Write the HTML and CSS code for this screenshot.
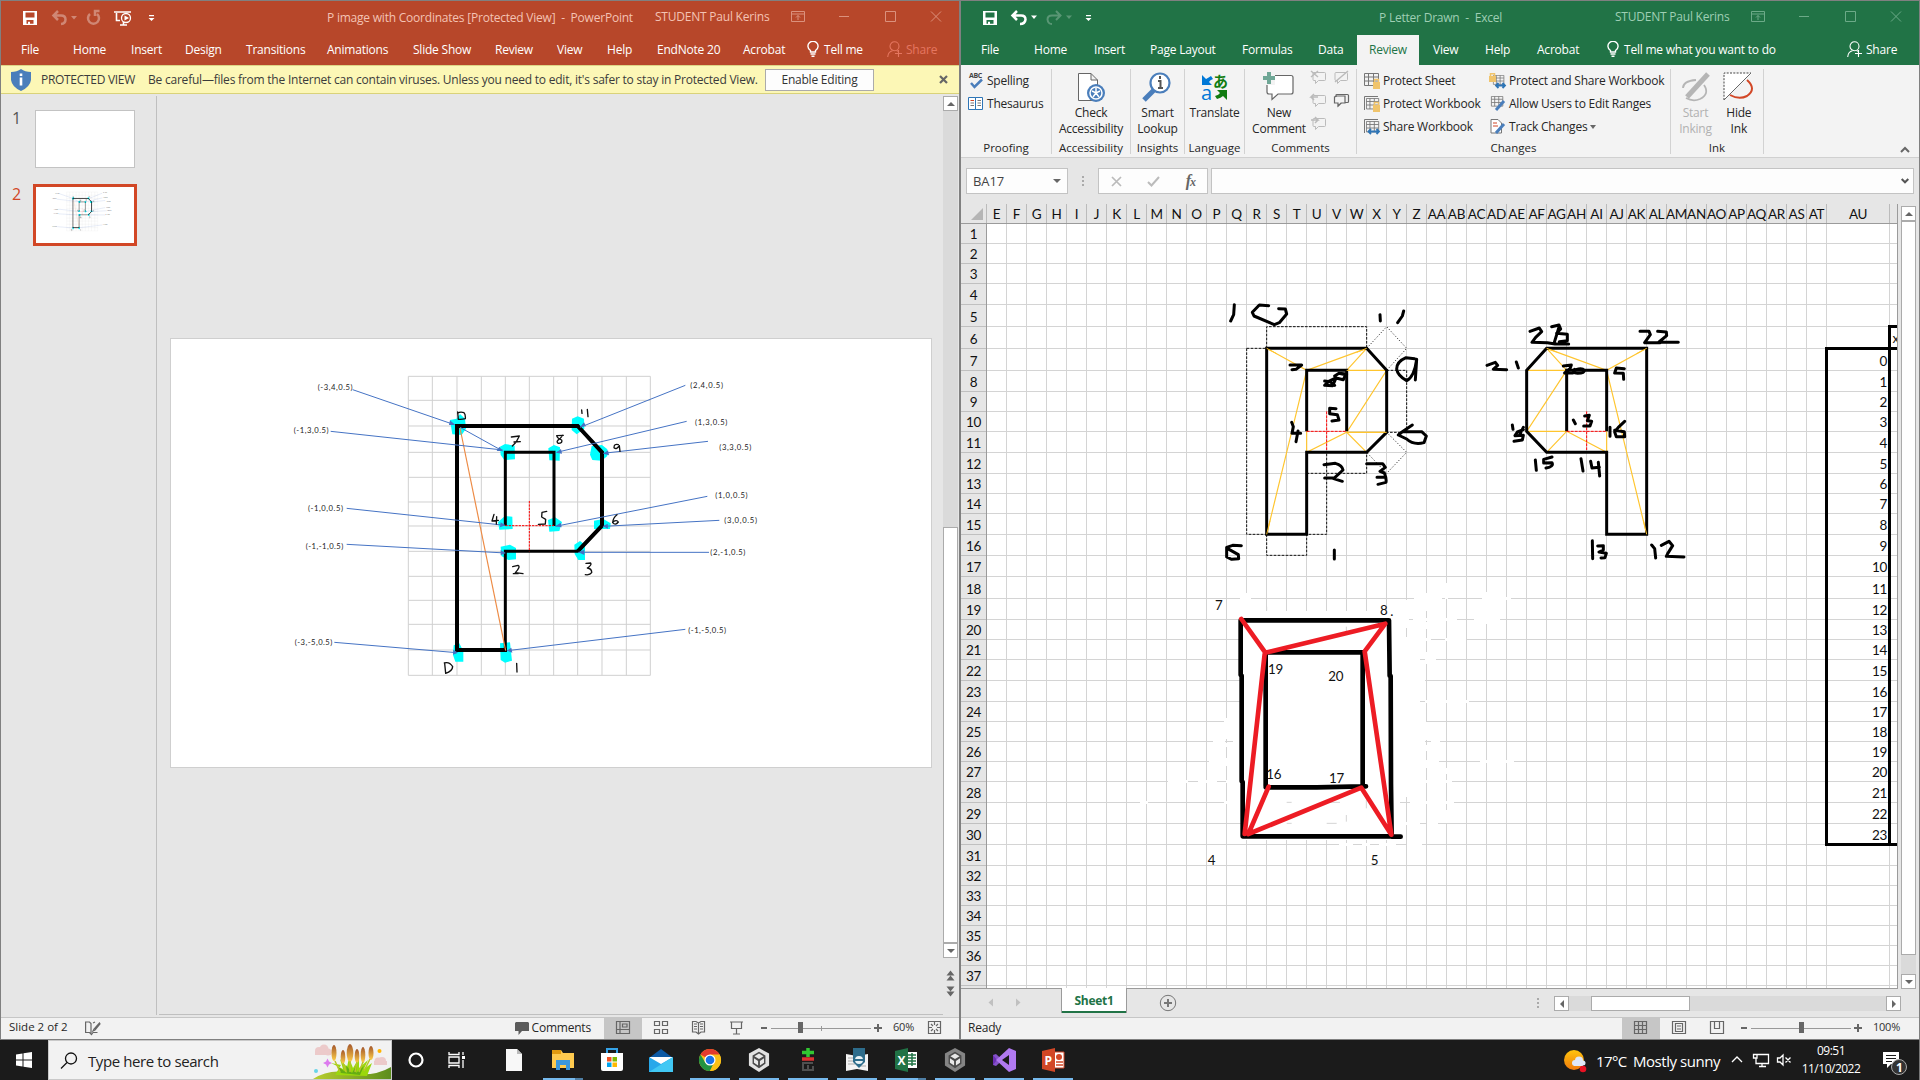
FILE: index.html
```html
<!DOCTYPE html>
<html lang="en">
<head>
<meta charset="utf-8">
<title>Desktop</title>
<link rel="stylesheet" href="styles.css">
</head>
<body>
<svg class="symbols" width="0" height="0">
  <symbol id="save" viewBox="0 0 14 14"><path d="M0 0H14V14H0Z" fill="currentColor"/><path class="hole" d="M2.5 1.5H11.5V6.5H2.5ZM3.5 9H10.5V12.8H7V10.8H5V12.8H3.5Z"/></symbol>
  <symbol id="bulb" viewBox="0 0 12 16"><path d="M3.5 11V9.500C1.500 8 .9 6.800.9 5.200A5 4.800 0 0 1 11.100 5.200C11.100 6.800 10.500 8 8.500 9.500V11ZM3.500 13H8.500M4.500 15.300H7.500" fill="none" stroke="currentColor" stroke-width="1.400"/></symbol>
  <symbol id="person" viewBox="0 0 15 16"><circle cx="7.500" cy="5.300" r="4.500"/><path d="M.7 16C1 12 3 10.200 5.500 9.700M9.500 9.600L11 10.200M11.500 9V16M8 12.500H15"/></symbol>
  <symbol id="winctl" viewBox="0 0 160 20"><path d="M.5 3.500H13.500V13.500H.5ZM.5 6H13.500M7 12V7.500M5 9.500L7 7.500L9 9.500M48 8.500H58M94.500 3.500H104.500V13.500H94.500ZM140 3.500L150 13.500M150 3.500L140 13.500"/></symbol>
  <symbol id="cube" viewBox="0 0 24 26"><path d="M12 0L23 6V19L12 26L1 19V6Z" fill="currentColor"/><path d="M12 4L19 8V17L12 22L5 17V8Z" fill="#4a4a4a"/><path d="M12 6L17 9L12 12L7 9ZM6.500 11L11 14V19L6.500 16ZM17.500 11L13 14V19L17.500 16Z" fill="#e8e8e8"/></symbol>
  <symbol id="comment" viewBox="0 0 16 16"><path d="M2 3.500Q2 2.500 3 2.500H13.500Q14.500 2.500 14.500 3.500V9.500Q14.500 10.500 13.500 10.500H7.500L4.500 13.500V10.500H3Q2 10.500 2 9.500Z"/></symbol>
  <symbol id="sheet" viewBox="0 0 16 16"><path d="M.5.500H14.500V12.500H.5ZM.5 4H14.500M.5 8H14.500M4.500.500V12.500M9.500.500V12.500"/></symbol>
</svg>

<main class="windows">
  <section class="window ppt">
    <header class="titlebar">
      <svg class="qat" width="160" height="32" viewBox="0 0 160 32">
        <use href="#save" x="22" y="11" width="14" height="14"/>
        <g class="faded" fill="none" stroke="currentColor" stroke-width="2.500"><path d="M57 11L52.500 15.500L57 20M53 15.500H60Q64.500 15.500 64.500 19.500T60 24"/><path d="M89 14A5.500 5.500 0 1 0 96 14M98.500 11H94V16"/></g>
        <path class="faded" d="M70 16H76L73 19.500Z" fill="currentColor"/>
        <path d="M113 12H130M115.500 13V20.500H119M119 25H126M122.500 22V25" fill="none" stroke="currentColor" stroke-width="1.600"/><circle cx="125" cy="18" r="4.500" fill="none" stroke="currentColor" stroke-width="1.300"/><path d="M123.500 15.500L128 18L123.500 20.500Z" fill="currentColor"/>
        <path d="M148 15H153V16.200H148ZM147.500 18H153.500L150.500 21Z" fill="currentColor"/>
      </svg>
      <span class="doc">P image with Coordinates [Protected View]&nbsp; -&nbsp; PowerPoint</span>
      <span class="user">STUDENT Paul Kerins</span>
      <svg class="winctl" width="160" height="20"><use href="#winctl"/></svg>
    </header>
    <nav class="tabs">
      <span>File</span><span>Home</span><span>Insert</span><span>Design</span><span>Transitions</span><span>Animations</span><span>Slide Show</span><span>Review</span><span>View</span><span>Help</span><span>EndNote 20</span><span>Acrobat</span>
      <span class="tell"><svg width="12" height="16"><use href="#bulb"/></svg>Tell me</span>
      <span class="share dim"><svg width="15" height="16"><use href="#person"/></svg>Share</span>
    </nav>
    <div class="protected">
      <svg width="20" height="22" viewBox="0 0 20 22"><path d="M10 0Q14 3 20 3V11Q19 18 10 22Q1 18 0 11V3Q6 3 10 0Z" fill="#4a7ebb"/><path d="M8.700 4.500H11.300V7H8.700ZM8.700 8.500H11.300V16.500H8.700Z" fill="#fff"/></svg>
      <span class="pv">PROTECTED VIEW</span><span class="warn">Be careful—files from the Internet can contain viruses. Unless you need to edit, it's safer to stay in Protected View.</span>
      <button class="enable">Enable Editing</button>
      <svg class="close" width="9" height="9" viewBox="0 0 9 9"><path d="M1 1L8 8M8 1L1 8" stroke="#666" stroke-width="2.200"/></svg>
    </div>
    <div class="ppt-body">
      <aside class="thumbs">
        <div class="thumb"><b>1</b><div class="mini"></div></div>
        <div class="thumb active"><b>2</b><div class="mini">
          <svg width="98" height="56" viewBox="170 338 762 430" preserveAspectRatio="none"><use href="#p-diagram"/></svg>
        </div></div>
      </aside>
      <div class="stage"><div class="slide">
        <svg width="760" height="428" viewBox="171 339 760 428">
          <g id="p-diagram" transform="translate(280 350) scale(.33333)" fill="none">
            <path stroke="#d0d0d0" stroke-width="3" d="M385 79V976M457 79V976M531 79V976M604 79V976M676 79V976M748 79V976M821 79V976M893 79V976M966 79V976M1039 79V976M1111 79V976M385 79H1111M385 151H1111M385 228H1111M385 307H1111M385 382H1111M385 456H1111M385 528H1111M385 604H1111M385 679H1111M385 751H1111M385 823H1111M385 900H1111M385 976H1111"/>
            <path fill="#0ff" d="M510 210L530 206L540 192L555 206L558 236L545 255L517 253ZM660 290L675 282L704 287L705 328L673 330L662 315ZM805 295L822 285L840 292L839 332L808 331ZM876 206L893 199L912 206L913 236L890 253L875 240ZM935 288L966 285L982 298L982 318L965 332L937 330L930 314ZM654 516L675 498L697 500L698 537L658 539ZM804 510L825 502L846 516L838 543L808 545ZM942 512L970 507L992 520L990 537L942 537ZM662 590L690 584L708 594L708 628L685 630L664 618ZM883 584L900 573L915 584L915 630L895 630L884 612ZM521 886L538 880L550 904L550 935L526 935L519 915ZM660 880L690 877L696 932L675 938L662 930Z"/>
            <path stroke="#000" stroke-width="9" d="M531 228H893L966 307V527L893 604H676V900H531M676 527V307H822V528"/>
            <path stroke="#000" stroke-width="12" d="M531 222V905M526 228H893L966 307V527L893 604M526 900H681"/>
            <path stroke="#ed8b45" stroke-width="3.500" d="M540 234L677 902"/>
            <path stroke="red" stroke-width="3" stroke-dasharray="7 3" d="M748 453V604M676 527H822"/>
            <g stroke="#4472c4" stroke-width="3"><path d="M218 119L523 224M540 232L668 303M152 244L668 300M200 475L675 526M200 583L676 609M163 877L530 908M1216 106L900 232M1220 214L830 307M1284 274L970 310M1282 439L826 529M1318 511L970 529M1287 607L895 607M1216 838L682 902"/></g>
            <path fill="#4472c4" d="M526 225L510 211L507 225ZM668 303L650 303L658 290ZM828 308L843 297L846 311ZM970 311L984 301L987 316ZM900 231L912 217L918 229ZM826 529L842 518L845 532ZM968 529L983 521L984 536ZM895 607L913 599V615ZM676 526L662 517L660 532ZM676 609L662 600V616ZM534 908L520 899L519 914ZM680 902L694 893L697 908Z"/>
            <g stroke="#111" stroke-width="4" stroke-linecap="round" stroke-linejoin="round"><path d="M533 186L535 208Q546 209 556 206Q557 192 552 188Q540 184 533 190M905 180L906 190M922 178L924 200M694 261L718 258L708 277L697 288M702 276L721 275M850 256L830 257Q832 265 845 270Q848 280 835 280Q826 274 840 266L848 256M1015 284Q1002 280 1002 293Q1010 300 1018 287L1020 304M642 493L636 513L655 511M650 500L649 522M800 484L786 487L785 501L797 508L796 522L775 523M1011 494Q999 503 998 518Q1006 528 1015 516Q1010 508 999 516M698 650L714 646Q723 650 706 668L729 671M700 671L714 671M918 640L932 639Q936 645 922 654Q936 656 935 668Q930 676 916 674M494 940L497 970Q517 964 518 950Q508 934 493 939M710 940L711 966"/></g>
            <g class="coords"><text x="113" y="120" textLength="105">(-3,4,0.5)</text><text x="41" y="249" textLength="105">(-1,3,0.5)</text><text x="84" y="483" textLength="105">(-1,0,0.5)</text><text x="77" y="597" textLength="113">(-1,-1,0.5)</text><text x="44" y="885" textLength="113">(-3,-5,0.5)</text><text x="1231" y="114" textLength="98">(2,4,0.5)</text><text x="1245" y="225" textLength="97">(1,3,0.5)</text><text x="1318" y="300" textLength="96">(3,3,0.5)</text><text x="1306" y="444" textLength="97">(1,0,0.5)</text><text x="1333" y="519" textLength="98">(3,0,0.5)</text><text x="1291" y="615" textLength="105">(2,-1,0.5)</text><text x="1225" y="849" textLength="113">(-1,-5,0.5)</text></g>
          </g>
        </svg>
      </div></div>
      <div class="vscroll">
        <i class="btn up"></i><i class="space"></i><i class="grip"></i><i class="btn down"></i>
        <svg width="15" height="48" viewBox="0 0 15 48" fill="#666"><path d="M3.500 12L7.500 7L11.500 12ZM3.500 17L7.500 12L11.500 17ZM3.500 23L7.500 28L11.500 23ZM3.500 28L7.500 33L11.500 28Z"/></svg>
      </div>
    </div>
    <footer class="status">
      <span class="slide-no">Slide 2 of 2</span>
      <svg width="16" height="14" viewBox="0 0 16 14" fill="none" stroke="#666" stroke-width="1.200"><path d="M6 12V2.500L4.500 1H.6V11.500H4.500L6.500 13.500L8 11.500H12.500M14.500 2L9 8L8 10L10 9L15 3ZM8 2L10 1"/></svg>
      <span class="cmt"><svg width="14" height="15" viewBox="0 0 14 15"><path d="M1 1H13L14 2V10H7L3.500 14V10H0V2Z" fill="#5b5b5b"/></svg>Comments</span>
      <svg class="views" width="355" height="21" viewBox="605 1018 355 21" fill="none" stroke="#666" stroke-width="1.200">
        <path d="M605 1018H643V1039H605Z" fill="#c6c6c6" stroke="none"/>
        <path d="M617.500 1021.500H630.500V1033.500H617.500ZM621 1021.500V1033.500M617.500 1029.500H630.500M623.500 1024H628V1027H623.500ZM655.500 1021.500H660.500V1025.500H655.500ZM663.500 1021.500H668.500V1025.500H663.500ZM655.500 1029.500H660.500V1033.500H655.500ZM663.500 1029.500H668.500V1033.500H663.500ZM699.500 1034V1023L697 1021.500H693.500V1032H697L699.500 1034L702 1032H705.500V1021.500H702L699.500 1023M695 1024H698M695 1026.500H698M695 1029H698M701 1024H704M701 1026.500H704M701 1029H704M731 1022H744M732.500 1022V1028.500H742.500V1022M737.500 1028.500V1034M734 1034H741"/>
        <path d="M772 1028.500H872M822.500 1026V1031" stroke="#999" stroke-width="1"/>
        <path d="M762 1028H768M875 1028H883M879 1024V1032" stroke-width="2"/><path d="M799 1022H804V1033H799Z" fill="#666" stroke="none"/>
        <path d="M929.500 1021.500H941.500V1033.500H929.500ZM935.500 1022V1025M935.500 1030V1033M930 1027.500H933M938 1027.500H941M932 1024L934 1026M939 1031L937 1029M939 1024L937 1026M932 1031L934 1029"/>
        <text x="894" y="1031" textLength="21" class="pct">60%</text>
      </svg>
    </footer>
  </section>

  <section class="window xl">
    <header class="titlebar">
      <svg class="qat" width="160" height="32" viewBox="0 0 160 32">
        <use href="#save" x="22" y="11" width="14" height="14"/>
        <path d="M56 11L51.500 15.500L56 20M52 15.500H60Q64.500 15.500 64.500 19.500Q64 24 59 24" fill="none" stroke="currentColor" stroke-width="2.500"/>
        <path d="M70 15.500H76L73 19Z" fill="currentColor"/>
        <g class="faint"><path d="M95 11L99.500 15.500L95 20M99 15.500H91Q86.500 15.500 86.500 19.500Q87 24 91 24" fill="none" stroke="currentColor" stroke-width="2"/><path d="M105 15.500H111L108 19Z" fill="currentColor"/></g>
        <path d="M125 15H130V16.200H125ZM124.500 18H130.500L127.500 21Z" fill="currentColor"/>
      </svg>
      <span class="doc">P Letter Drawn&nbsp; -&nbsp; Excel</span>
      <span class="user">STUDENT Paul Kerins</span>
      <svg class="winctl" width="160" height="20"><use href="#winctl"/></svg>
    </header>
    <nav class="tabs">
      <span>File</span><span>Home</span><span>Insert</span><span>Page Layout</span><span>Formulas</span><span>Data</span><span class="current">Review</span><span>View</span><span>Help</span><span>Acrobat</span>
      <span class="tell"><svg width="12" height="16"><use href="#bulb"/></svg>Tell me what you want to do</span>
      <span class="share"><svg width="15" height="16"><use href="#person"/></svg>Share</span>
    </nav>
    <div class="ribbon">
      <div class="group proof"><div class="rows">
        <div><svg width="16" height="17" viewBox="0 0 16 17"><text x="1" y="6" class="abc" textLength="13">ABC</text><path d="M3 11L6.500 15L14 7.500" fill="none" stroke="#4a7ebb" stroke-width="2.500"/></svg>Spelling</div>
        <div><svg width="16" height="15" viewBox="0 0 16 15"><path d="M.5 1.500H7.500V13.500H.5ZM7.500 1.500H14.500V13.500H7.500Z" fill="#fff" stroke="#2e75b6"/><path d="M9.500 4.500H13M9.500 7H13M9.500 9.500H13M2.500 7H6M2.500 9.500H6" stroke="#777"/><path d="M2.500 4.500H6" stroke="#d24726"/></svg>Thesaurus</div>
      </div><label>Proofing</label></div>
      <div class="group acc"><div class="big"><svg width="30" height="32" viewBox="0 0 30 32"><path d="M2.500 1.500H15L21.500 8V28.500H2.500ZM15 1.500V8H21.500" fill="#fff" stroke="#666"/><circle cx="20" cy="21" r="9" fill="#4a7ebb"/><circle cx="20" cy="21" r="6" fill="none" stroke="#fff" stroke-width="1.500"/><path d="M20 16V22M16 19L20 21L24 19M17 25L20 21L23 25" stroke="#fff" stroke-width="1.500" fill="none"/></svg><p>Check<br>Accessibility</p></div><label>Accessibility</label></div>
      <div class="group ins"><div class="big"><svg width="30" height="32" viewBox="0 0 30 32"><path d="M2 28L12 18" stroke="#4a7ebb" stroke-width="5"/><circle cx="18" cy="11" r="9.500" fill="#fff" stroke="#4a7ebb" stroke-width="2.200"/><path d="M18 4V7M16 9H18.500V15.500M16 16H21" stroke="#555" stroke-width="2" fill="none"/></svg><p>Smart<br>Lookup</p></div><label>Insights</label></div>
      <div class="group lang"><div class="big"><svg width="30" height="32" viewBox="0 0 30 32"><text x="13" y="15" class="jp">あ</text><text x="1" y="28" class="lat">a</text><path d="M2 3L2 13H12L9 10Q10 8 13 7L11 4Q8 6 6 7Z" fill="#0078d7"/><path d="M27 28V18H17L20 21Q19 23 15 24L17 27Q21 26 23 24Z" fill="#107c10"/></svg><p>Translate</p></div><label>Language</label></div>
      <div class="group comm"><div class="big"><svg width="32" height="32" viewBox="0 0 32 32"><path d="M4 5.500Q4 3.500 6 3.500H28Q30 3.500 30 5.500V20Q30 22 28 22H15L9 27.500V22H6Q4 22 4 20Z" fill="#fff" stroke="#666" stroke-width="1.200"/><path d="M-1 0H12V13H-1Z" fill="#f3f3f3"/><path d="M6 0V12M0 6H12" stroke="#6fa796" stroke-width="4"/></svg><p>New<br>Comment</p></div>
        <svg class="small" width="40" height="68" fill="none" stroke="#bbb"><use href="#comment" y="0" width="16" height="16"/><use href="#comment" x="22" y="0" width="16" height="16"/><use href="#comment" y="23" width="16" height="16"/><use href="#comment" y="46" width="16" height="16"/><path d="M0 1L7 7M7 1L0 7M24 12L37 1M7 27H0L3 24M0 27L3 30M0 50H7L4 47M7 50L4 53" stroke-width="1.500"/><g stroke="#666" stroke-width="1.200"><use href="#comment" x="23" y="22" width="16" height="16"/><path d="M26 26H34V33H30L27 36V33H23.500V27Z" fill="#f3f3f3"/></g></svg>
        <label>Comments</label></div>
      <div class="group chg"><div class="pair">
        <div class="rows">
          <div><svg width="16" height="16" viewBox="0 0 16 16" fill="none" stroke="#777"><use href="#sheet" width="16" height="16"/><path d="M9 9H16V16H9Z" fill="#f0c46c" stroke="none"/><path d="M10.500 9V6.500H14.500V9" stroke="#f0c46c" stroke-width="1.500"/></svg>Protect Sheet</div>
          <div><svg width="16" height="16" viewBox="0 0 16 16" fill="none" stroke="#777"><path d="M.5 14V.5H14"/><use href="#sheet" x="2" y="2" width="14" height="14"/><path d="M9 9H16V16H9Z" fill="#f0c46c" stroke="none"/><path d="M10.500 9V6.500H14.500V9" stroke="#f0c46c" stroke-width="1.500"/></svg>Protect Workbook</div>
          <div><svg width="16" height="16" viewBox="0 0 16 16" fill="none" stroke="#777"><path d="M.5 14V.5H14"/><use href="#sheet" x="2" y="2" width="14" height="14"/><path d="M4 12.500H15M7 10L4.500 12.500L7 15M12.500 10L15 12.500L12.500 15" stroke="#2e75b6" stroke-width="1.800"/></svg>Share Workbook</div>
        </div>
        <div class="rows">
          <div><svg width="17" height="16" viewBox="0 0 17 16" fill="none" stroke="#777"><use href="#sheet" x="3" y="2" width="14" height="12"/><path d="M0 3H7V9H0Z" fill="#f0c46c" stroke="none"/><path d="M1.500 3V.8H5.500V3" stroke="#f0c46c" stroke-width="1.500"/><path d="M7 12.500H16M9.500 10L7 12.500L9.500 15M13.500 10L16 12.500L13.500 15" stroke="#2e75b6" stroke-width="1.800"/></svg>Protect and Share Workbook</div>
          <div><svg width="17" height="16" viewBox="0 0 17 16" fill="none" stroke="#777"><use href="#sheet" x="1" width="15" height="13"/><path d="M15 5L7 14" stroke="#4a7ebb" stroke-width="3"/></svg>Allow Users to Edit Ranges</div>
          <div><svg width="17" height="16" viewBox="0 0 17 16" fill="none" stroke="#777"><path d="M2 .5H9L12.500 4V14H2Z" fill="#fff"/><path d="M4 4H8M4 7H9" stroke="#d24726"/><path d="M15 5L7 14" stroke="#4a7ebb" stroke-width="3"/></svg>Track Changes<i class="caret"></i></div>
        </div>
      </div><label>Changes</label></div>
      <div class="group ink"><div class="duo">
        <div class="big off"><svg width="30" height="32" viewBox="0 0 30 32" fill="none" stroke="#b5b5b5"><path d="M28 2L7 25" stroke-width="5"/><path d="M16 8Q3 9 3 16M24 13Q30 22 20 27Q13 30 6 26" stroke-width="1.800"/></svg><p>Start<br>Inking</p></div>
        <div class="big"><svg width="32" height="32" viewBox="0 0 32 32" fill="none"><path d="M24 8Q34 17 24 24Q16 28 7 23" stroke="#d24726" stroke-width="2"/><path d="M1 1H29L1 28Z" fill="#fff"/><path d="M1 28V1H28" stroke="#444" stroke-dasharray="2 1.300"/><path d="M28 1L1 28" stroke="#666"/></svg><p>Hide<br>Ink</p></div>
      </div><label>Ink</label></div>
      <svg class="fold" width="10" height="7" viewBox="0 0 10 7"><path d="M1 6L5 2L9 6" fill="none" stroke="#666" stroke-width="2"/></svg>
    </div>
    <div class="formula">
      <div class="name">BA17<i class="caret"></i></div>
      <i class="dots"></i>
      <div class="fx"><svg width="11" height="11" viewBox="0 0 11 11"><path d="M1 1L10 10M10 1L1 10" stroke="#bbb" stroke-width="1.700"/></svg><svg width="13" height="11" viewBox="0 0 13 11"><path d="M1 6L4.500 9.500L12 1" fill="none" stroke="#bbb" stroke-width="2"/></svg><em>f<small>x</small></em></div>
      <div class="input"><svg width="8" height="6" viewBox="0 0 8 6"><path d="M.7 1L4 4.300L7.300 1" fill="none" stroke="#555" stroke-width="2"/></svg></div>
    </div>
    <div class="book">
      <div class="sheet">
        <div class="colheads" id="cols"><span class="corner"></span></div>
        <div class="cells">
          <div class="rowheads" id="rows"></div>
          <svg id="grid" width="911" height="765" viewBox="987 224 911 765">
            <g id="lines"></g>
            <path stroke="#fff" stroke-width="3" fill="#fff" d="M1240 598.500H1250M1414 598.500H1442M1482 598.500H1511M1400 619.500H1409M1413 619.500H1457M1474 619.500H1500M1390 639.500H1431M1445 639.500H1466M1390 659.500H1420M1425 659.500H1436M1390 680.500H1425M1390 701.500H1420M1425 701.500H1469M1224 721.500H1242M1390 721.500H1426M1213 741.500H1225M1233 741.500H1245M1390 741.500H1425M1431 741.500H1440M1209 761.500H1245M1390 761.500H1439M1480 761.500H1514M1168 781.500H1188M1198 781.500H1217M1226 781.500H1245M1390 781.500H1452M1140 802.500H1148M1224 802.500H1245M1410 802.500H1454M1390 823.500H1420M1427 823.500H1438M1339 844.500H1353M1362 844.500H1370M1379 844.500H1396M1407 844.500H1422M1406.500 600V628M1406.500 637V797M1426.500 593V611M1426.500 622V629M1426.500 652V664M1426.500 722V740M1426.500 745V751M1426.500 760V768M1446.500 583V599M1446.500 768V774M1446.500 810V823M1486.500 592V624M1226.500 718V739M1226.500 743V747M1226.500 758V766"/>
            <path fill="#fff" d="M1240 611H1400V840H1241ZM1243 593H1251V612H1243Z"/>
            <g transform="translate(1140 580) scale(.33333)" fill="none" stroke-width="14" stroke-linecap="round" stroke-linejoin="round">
              <path stroke="#d4d4d4" stroke-width="3" stroke-linecap="butt" d="M380 80V92M619 140V158M679 660V685M560 667H600M619 705V725M440 730H455M440 667H455M560 730H590"/>
              <path stroke="#000" d="M302 121H747L749 287L752 288L753 612L755 770H782M302 121V285L305 287V604L308 606V769H755M377 217H668V619H678M377 217V619M377 622H530L668 619"/>
              <path stroke="#ed1c24" d="M304 117L376 218L736 131L674 214L754 764L664 623L325 762L386 620M374 222L314 762"/>
              <g class="note"><text x="225" y="91">7</text><text x="720" y="105">8</text><text x="751" y="107">.</text><text x="384" y="282">19</text><text x="565" y="304">20</text><text x="379" y="598">16</text><text x="567" y="609">17</text><text x="203" y="855">4</text><text x="692" y="855">5</text></g>
            </g>
            <g transform="translate(1210 290) scale(.33333)" fill="none">
              <path stroke="#111" stroke-width="3" stroke-dasharray="8 4" d="M170 175V110H470V175M110 175H170M110 175V733H350V487M170 733V796H290V733M530 241H590V427H530M290 550H470V487"/>
              <path stroke="#111" stroke-width="3" stroke-dasharray="3 6" d="M470 175L530 110L590 175L530 241M530 427L590 487L530 550L470 487"/>
              <path stroke="#ffc52e" stroke-width="3.500" d="M170 175L290 241L470 175L410 241H530L410 427H530M170 733L290 241M290 424V487L410 427L470 487M1010 175L1190 241L1310 175M1010 175L1070 241H950M1070 241L950 424H1070L1010 487M1070 424L1190 487V424M1190 241L1310 733"/>
              <path stroke="#000" stroke-width="9" d="M170 175H470L530 241V427L470 487H290V733H170ZM290 424V241H410V424M1010 175H1310V733H1190V487H1010L950 424V241ZM1070 424V241H1190V424"/>
              <path stroke="#ffc52e" stroke-width="3" d="M170 175L200 191M470 175L440 187M170 733L180 692M1010 175L1040 186M1310 175L1280 191M1310 733L1300 690M410 427H530M410 241H420"/>
              <path stroke="red" stroke-width="3" stroke-dasharray="9 3" d="M350 364V480M290 424H410M1130 364V480M1070 424H1190"/>
              <path stroke="#000" stroke-width="9" stroke-linecap="round" stroke-linejoin="round" d="M73 44L71 74L62 93M176 47L148 45L127 67L132 78L193 104L208 98L230 72L226 57L206 56M510 74L511 93M581 63L577 78L563 98M240 225H275L258 238L246 239M387 250L407 254L400 269L378 264L374 258L387 250L410 252M373 266L356 274L344 286L368 287L376 269M344 273L360 275L374 286M245 397L250 410L246 430H272M264 423L258 455M378 356L359 355V371L382 374L387 390L366 393M614 206L588 203Q560 215 560 237Q563 257 590 272Q613 260 620 208L616 270M607 405L576 426L565 435L590 447Q610 466 642 458L649 438L635 425H580M342 524L376 520Q397 526 399 540L371 566L397 574M344 564H373M470 521H518L526 532L510 544L523 549Q530 565 528 577L504 583M501 562H520M94 767L68 766L50 772V801L65 808L86 806L85 794L57 778M373 780V807M960 124L988 114L995 125L977 142L966 157L1012 158L1035 162L1076 162M1025 110L1047 105L1052 117L1040 130L1072 133L1072 152L1048 155M1048 108L1033 157M1290 124H1317L1321 134L1304 158H1350M1343 124L1369 126L1370 137L1347 156L1405 157M831 226L856 217L863 226L850 238L890 239M919 216L925 234M1060 228L1084 225L1080 236L1064 249H1088M1094 238Q1085 248 1103 250Q1123 250 1123 241Q1116 232 1098 239M1243 236L1219 234L1214 249L1240 250L1241 268M907 405L909 418M940 419L922 426L915 437L940 436L937 450L912 454M940 412L929 434M1090 390L1096 401M1124 378L1138 376L1132 392L1145 394L1140 408L1121 408M1200 412V439M1244 394L1225 412L1214 426L1219 440L1244 440L1243 425L1214 421M976 510L979 541M1026 501L1001 508V519L1026 518Q1032 530 1008 534M1113 506L1119 543M1142 514L1146 534L1168 532M1165 517L1169 558M1147 752L1148 806M1163 768L1180 767L1180 780L1167 786L1189 790L1185 803L1173 804M1325 765L1334 776L1337 804M1354 766L1377 754L1388 767L1373 791L1369 799L1422 801"/>
            </g>
            <path fill="none" stroke="#000" stroke-width="3" d="M1898 326.500H1889.500V844.500H1898M1898 348.500H1826.500V844.500H1890"/>
            <g id="cellText" class="celltext"><text x="1892.500" y="343">x</text></g>
          </svg>
        </div>
      </div>
      <div class="vscroll"><i class="btn up"></i><i class="grip"></i><i class="space"></i><i class="btn down"></i></div>
    </div>
    <div class="sheetbar">
      <svg class="nav" width="99" height="28" viewBox="0 0 99 28"><path d="M32 9.500V17.500L27.500 13.500ZM55 9.500V17.500L59.500 13.500Z" fill="#c0c0c0"/></svg>
      <span class="sheettab">Sheet1</span>
      <svg class="plus" width="18" height="18" viewBox="0 0 18 18" fill="none"><circle cx="9" cy="9" r="7.700" stroke="#777"/><path d="M9 5V13M5 9H13" stroke="#777" stroke-width="2"/></svg>
      <i class="dots"></i>
      <div class="hscroll"><i class="btn left"></i><i class="gap"></i><i class="grip"></i><i class="space"></i><i class="btn right"></i></div>
    </div>
    <footer class="status"><span class="ready">Ready</span>
      <svg class="views" width="297" height="21" viewBox="1622 1018 297 21" fill="none" stroke="#666" stroke-width="1.200">
        <path d="M1622 1018H1660V1039H1622Z" fill="#c6c6c6" stroke="none"/>
        <path d="M1634.500 1021.500H1646.500V1033.500H1634.500ZM1638.500 1021.500V1033.500M1642.500 1021.500V1033.500M1634.500 1025.500H1646.500M1634.500 1029.500H1646.500M1672.500 1021.500H1685.500V1033.500H1672.500ZM1675.500 1023.500H1682.500V1031.500H1675.500ZM1677 1026H1681M1677 1029H1681M1710.500 1021.500H1723.500V1033.500H1710.500ZM1714.500 1021.500V1028.500H1719.500V1021.500"/>
        <path d="M1751 1028.500H1851" stroke="#999" stroke-width="1"/><path d="M1741 1028H1747M1854 1028H1862M1858 1024V1032" stroke-width="2"/><path d="M1799 1022H1804V1033H1799Z" fill="#666" stroke="none"/>
        <text x="1873" y="1031" textLength="27" class="pct">100%</text>
      </svg>
    </footer>
  </section>
</main>

<div class="taskbar">
  <svg class="start" width="48" height="40" viewBox="0 0 48 40"><path d="M16 14.500L22.500 13.500V19.500H16ZM23.500 13.300L32 12V19.500H23.500ZM16 20.500H22.500V26.500L16 25.500ZM23.500 20.500H32V28L23.500 26.700Z" fill="#fff"/></svg>
  <div class="search">
    <svg width="18" height="18" viewBox="0 0 18 18"><circle cx="11" cy="6.500" r="5.500" fill="none" stroke="#111" stroke-width="1.300"/><path d="M7 10.500L1 16.500" stroke="#111" stroke-width="1.300"/></svg>
    <span>Type here to search</span>
    <svg class="art" width="80" height="38" viewBox="0 0 80 38">
      <defs><linearGradient id="hill"><stop offset="0" stop-color="#b9ce2e"/><stop offset="1" stop-color="#5c8d1c"/></linearGradient><linearGradient id="reed" x2="0" y2="1"><stop offset="0" stop-color="#a4572a"/><stop offset="1" stop-color="#ffcf4a"/></linearGradient></defs>
      <g fill="#eccaca"><circle cx="8" cy="10" r="4"/><circle cx="13" cy="8" r="4.500"/><circle cx="17" cy="11" r="3.500"/><path d="M4 10H20V14H4Z"/><circle cx="67" cy="20" r="3.500"/><circle cx="71" cy="20" r="4"/><path d="M63 20H76V24H63Z"/></g>
      <path d="M2 38Q20 26 44 33Q65 35 80 26V38Z" fill="url(#hill)"/>
      <path d="M24 34L30 24L20 22L32 28L29 18L36 26L38 17L42 27L48 17L48 27L57 19L53 28L61 22L56 35Z" fill="#9ad80c"/><path d="M30 32L26 25L36 32L35 24L41 32L46 23L45 32L53 25L49 34Z" fill="#65ac13"/>
      <g fill="url(#reed)"><ellipse cx="23" cy="12" rx="2.500" ry="8"/><ellipse cx="32" cy="16" rx="2.300" ry="7"/><ellipse cx="39" cy="12" rx="3.300" ry="9"/><ellipse cx="46" cy="15" rx="2.300" ry="7"/><ellipse cx="52" cy="14" rx="2.300" ry="8"/><ellipse cx="60" cy="12" rx="2.500" ry="7"/></g>
      <path d="M24 20L29 31M32 22L35 31M39 20V31M46 21L44 31M52 21L48 31M59 18L53 30" stroke="#b9c52a" stroke-width="1.500"/>
      <path d="M16.500 17.500L18 20.500L21 22L18 23.500L16.500 26.500L15 23.500L12 22L15 20.500Z" fill="#dc7bee"/><circle cx="68.500" cy="10" r="2" fill="#ffb400"/><circle cx="5" cy="30" r="2" fill="#68d4e8"/>
    </svg>
  </div>
  <div class="app"><svg width="16" height="16" viewBox="0 0 16 16"><circle cx="8" cy="8" r="6.500" fill="none" stroke="#fff" stroke-width="2.200"/></svg></div>
  <div class="app view"><svg width="17" height="16" viewBox="0 0 17 16" fill="none" stroke="#fff" stroke-width="1.300"><path d="M1 0V2.500H11V0M1 16V13.500H11V16M1 5H11V11H1ZM15 0V3M15 8V16"/><path d="M14 4H17V7H14Z" fill="#fff" stroke="none"/></svg></div>
  <div class="app"><svg width="16" height="22" viewBox="0 0 16 22"><path d="M0 0H11L16 5V22H0Z" fill="#f8f8f8"/><path d="M11 0V5H16" fill="#bbb"/></svg></div>
  <div class="app open multi"><svg width="22" height="20" viewBox="0 0 22 20"><path d="M0 0H9L11 3H22V18H0Z" fill="#ffca4f"/><path d="M0 0H9V4H0Z" fill="#e29a10"/><path d="M4 10H18V20H14V15H8V20H4Z" fill="#3b97dd"/></svg></div>
  <div class="app"><svg width="24" height="24" viewBox="0 0 24 24"><path d="M7 6V1H17V6" fill="none" stroke="#35a3e8" stroke-width="2"/><path d="M1 5H23V21Q23 23 21 23H3Q1 23 1 21Z" fill="#fff"/><path d="M7 9H11.500V13.500H7Z" fill="#f25022"/><path d="M12.500 9H17V13.500H12.500Z" fill="#7fba00"/><path d="M7 14.500H11.500V19H7Z" fill="#00a4ef"/><path d="M12.500 14.500H17V19H12.500Z" fill="#ffb900"/></svg></div>
  <div class="app"><svg width="24" height="23" viewBox="0 0 24 23"><path d="M0 9L12 0L24 9V23H0Z" fill="#0c59a4"/><path d="M1 8H23V18H1Z" fill="#fff"/><path d="M0 8L12 15L24 8V23H0Z" fill="#28a8ea"/><path d="M0 23L24 8V23Z" fill="#41c8f4"/></svg></div>
  <div class="app open"><svg width="22" height="22" viewBox="0 0 24 24"><circle cx="12" cy="12" r="12" fill="#fbc116"/><path d="M12 12L1.600 6A12 12 0 0 1 22.400 6Z" fill="#e33b2e"/><path d="M12 24A12 12 0 0 1 1.600 6L7 15L12 17.500H15Z" fill="#229342"/><path d="M12 6H22.400A12 12 0 0 1 12 24L17 15Z" fill="#fbc116"/><circle cx="12" cy="12" r="6" fill="#fff"/><circle cx="12" cy="12" r="4.700" fill="#1a73e8"/></svg></div>
  <div class="app open cube"><svg width="22" height="24"><use href="#cube"/></svg></div>
  <div class="app open"><svg width="18" height="24" viewBox="0 0 18 24" fill="none"><path d="M9 0V9M3 4.500H15" stroke="#32c832" stroke-width="3.500"/><path d="M3 11H15" stroke="#d33" stroke-width="3.500"/><path d="M14 15H4V22H14V18M9 17V22" stroke="#505050" stroke-width="2"/></svg></div>
  <div class="app open"><svg width="24" height="24" viewBox="0 0 24 24"><path d="M1 6L12 8L23 6V23L12 21L1 23Z" fill="#f4f4f4"/><path d="M3 10H10M3 13H10M3 16H10M14 18H21" stroke="#aaa"/><path d="M8 0H20V14L14 20L8 14Z" fill="#2d6c8b"/><circle cx="14" cy="12" r="4" fill="#e9f3f6"/><path d="M10 12H18" stroke="#2d6c8b" stroke-width="2"/></svg></div>
  <div class="app open multi"><svg width="24" height="24" viewBox="0 0 24 24"><path d="M12 4H23V20H12Z" fill="#fff"/><path d="M14 7H22M14 10H22M14 13H22M14 16H22M18 5V18" stroke="#217346" stroke-width="1.500"/><path d="M1 3L14 0V24L1 21Z" fill="#217346"/><text x="3.500" y="16.500" class="logo">X</text></svg></div>
  <div class="app open cube dark"><svg width="22" height="24"><use href="#cube"/></svg></div>
  <div class="app open"><svg width="24" height="24" viewBox="0 0 24 24"><path d="M1 7L4 6L17 18L17 6L4 18L1 17V7Z" fill="#8552c9"/><path d="M1 7V17L5 12Z" fill="#6b2fb3"/><path d="M17 0L24 3V21L17 24L4 12Z" fill="#b179f1"/><path d="M17 7V17L10 12Z" fill="#1b1b1b"/></svg></div>
  <div class="app open"><svg width="24" height="24" viewBox="0 0 24 24"><path d="M12 4H23V20H12Z" fill="#fff" stroke="#d24726"/><path d="M15 14H22M15 17H22" stroke="#d24726" stroke-width="1.500"/><circle cx="18" cy="9" r="3" fill="#d24726"/><path d="M1 3L14 0V24L1 21Z" fill="#d24726"/><text x="3.500" y="16.500" class="logo">P</text></svg></div>
  <div class="tray">
    <svg width="24" height="24" viewBox="0 0 24 24"><defs><linearGradient id="sun" x2="0" y2="1"><stop offset="0" stop-color="#ffc40d"/><stop offset="1" stop-color="#f07a0c"/></linearGradient></defs><circle cx="11" cy="11" r="10" fill="url(#sun)"/><g fill="#dfe8f8"><circle cx="12" cy="14" r="3"/><circle cx="16" cy="11.500" r="4"/><circle cx="20" cy="14" r="2.500"/><path d="M11 13H20V17H11Z"/></g><circle cx="20" cy="20" r="3.300" fill="#e81123"/></svg>
    <span class="temp">17°C</span><span class="sunny">Mostly sunny</span>
    <svg class="sys" width="60" height="16" viewBox="1731 1052 60 16" fill="none" stroke="#fff" stroke-width="1.300"><path d="M1732 1062L1737 1057L1742 1062M1757 1054.500H1768.500V1063.500H1756V1058M1762 1063.500V1066.500M1759 1066.500H1766M1753.500 1054.500H1757V1058H1753.500ZM1777.500 1058H1780L1783 1055V1065L1780 1062H1777.500ZM1785.500 1057.500L1790.500 1062.500M1790.500 1057.500L1785.500 1062.500"/></svg>
    <div class="clock">09:51<br>11/10/2022</div>
    <svg class="notif" width="26" height="26" viewBox="1878 1050 26 26"><path d="M1879 1052H1895V1064H1887L1883 1068V1064H1879Z" fill="#fff"/><path d="M1882 1055.500H1892M1882 1058.500H1892M1882 1061.500H1888" stroke="#1b1b1b"/><circle cx="1895" cy="1067" r="7.500" fill="#333" stroke="#aaa"/><text x="1892" y="1071.500" class="badge">1</text></svg>
    <i class="desk"></i>
  </div>
</div>
<script src="sheet.js"></script>
</body>
</html>
```
FILE: styles.css
```css
* { box-sizing: border-box; }
body { margin: 0; width: 1920px; height: 1080px; overflow: hidden; display: flex; flex-direction: column; font: 12px/16px "Open Sans", "Noto Sans", sans-serif; letter-spacing: -.22px; color: #262626; white-space: nowrap; }
svg { display: block; flex: none; overflow: visible; }
.symbols { position: absolute; }
.windows { display: grid; grid-template-columns: 960px 960px; height: 1040px; }
.window { border: 1px solid #808080; display: flex; flex-direction: column; background: #e6e6e6; height: 1040px; min-width: 0; }
.ppt { --accent: #b7472a; --title: #f4c3b4; }
.xl { --accent: #217346; --title: #9fcfb4; }

.titlebar { height: 34px; background: var(--accent); display: grid; color: #fff; flex: none; line-height: 34px; }
.ppt .titlebar { grid-template-columns: 326px 328px 136px 1fr; }
.xl .titlebar { grid-template-columns: 418px 236px 136px 1fr; }
.qat { margin-top: -1px; }
.doc, .user { color: var(--title); }
.user { margin-top: -1px; }
.winctl { fill: none; stroke: var(--title); opacity: .6; margin-top: 7px; }
.hole { fill: var(--accent); }
.faded { opacity: .35; }
.faint { opacity: .25; }

.tabs { height: 30px; background: var(--accent); color: #fff; display: grid; line-height: 30px; flex: none; padding-left: 20px; }
.ppt .tabs { grid-template-columns: 52px 58px 54px 61px 81px 86px 82px 62px 50px 50px 86px 64px 80px 1fr; }
.xl .tabs { grid-template-columns: 53px 60px 56px 92px 76px 51px 64px 52px 52px 70px 240px 1fr; }
.tabs .current { background: #f3f3f3; color: var(--accent); margin-left: -12px; padding-left: 12px; width: 62px; }
.tell, .share { display: flex; gap: 5px; }
.tell svg, .share svg { margin-top: 6px; }
.share svg { fill: none; stroke: currentColor; stroke-width: 1.1; }
.share { gap: 4px; }
.dim { color: #e57660; }

.protected { height: 29px; background: #fcf7b6; border-top: 1px solid #ddd584; border-bottom: 1px solid #d9d27a; display: flex; align-items: center; padding-left: 10px; flex: none; color: #3b3b3b; }
.pv { margin-left: 10px; width: 107px; letter-spacing: -.3px; }
.warn { width: 617px; }
.enable { width: 109px; height: 22px; border: 1px solid #ababab; background: #fdfdfd; font: inherit; letter-spacing: inherit; color: #333; padding: 0; }
.close { margin-left: 65px; }

.ppt-body { flex: 1; display: flex; padding-top: 2px; }
.thumbs { width: 156px; border-right: 1px solid #bfbfbf; margin-bottom: 2px; padding-top: 14px; }
.thumb { display: flex; height: 76px; }
.thumb b { width: 34px; padding: 0 0 0 11px; font-weight: 400; font-size: 16px; line-height: 16px; color: #555; }
.mini { width: 100px; height: 58px; background: #fff; border: 1px solid #c3c3c3; }
.thumb.active b { color: #d24726; width: 32px; }
.active .mini { width: 104px; height: 62px; border: 3px solid #d24726; margin-top: -2px; }
.stage { flex: 1; border-bottom: 1px solid #bfbfbf; margin: 0 0 2px 2px; padding: 242px 0 0 11px; }
.slide { width: 762px; height: 430px; background: #fff; border: 1px solid #cfcfcf; }
.coords { fill: #222; font: 23px Lato, sans-serif; letter-spacing: 0; }

.vscroll { width: 15px; display: flex; flex-direction: column; background: #dadada; flex: none; }
.ppt .vscroll { margin-right: 1px; }
.ppt .space { height: 416px; }
.ppt .vscroll .grip { flex: 1; }
.ppt .vscroll svg { background: #e6e6e6; height: 59px; }
.grip { background: #fff; border: 1px solid #ababab; }
.btn { width: 15px; height: 15px; flex: none; background: #fff; border: 1px solid #ababab; display: flex; align-items: center; justify-content: center; }
.btn::after { content: ""; border: 4px solid transparent; }
.up::after { border-bottom: 4px solid #666; border-top: 0; }
.down::after { border-top: 4px solid #666; border-bottom: 0; }
.left::after { border-right: 4px solid #666; border-left: 0; }
.right::after { border-left: 4px solid #666; border-right: 0; }

.status { height: 22px; background: #f2f2f2; border-top: 1px solid #c6c6c6; display: flex; flex: none; line-height: 20px; }
.slide-no { margin-left: 8px; width: 76px; letter-spacing: 0; line-height: 18px; font-size: 11.5px; }
.status > svg { margin-top: 3px; }
.status > .views { margin-top: 0; }
.cmt { display: flex; gap: 3px; margin-left: 414px; width: 90px; }
.cmt svg { margin-top: 3px; }
.pct { fill: #333; stroke: none; font-size: 11px; }
.ready { margin-left: 7px; width: 654px; }

.ribbon { height: 93px; background: #f3f3f3; border-bottom: 1px solid #d0d0d0; display: flex; flex: none; padding-top: 4px; }
.group { height: 85px; border-right: 1px solid #d2d2d2; display: grid; grid-template: 70px 14px / 1fr; justify-items: center; flex: none; }
.group label { line-height: 18px; letter-spacing: 0; font-size: 11.5px; grid-column: 1 / -1; }
.proof { width: 91px; } .acc { width: 79px; } .ins { width: 54px; } .lang { width: 60px; }
.comm { width: 112px; grid-template-columns: 66px 1fr; }
.chg { width: 314px; } .ink { width: 93px; }
.rows div { height: 23px; display: flex; align-items: center; gap: 3px; }
.proof .rows { justify-self: start; padding-left: 7px; }
.pair { display: flex; justify-self: start; padding-left: 7px; margin-left: 0; }
.pair .rows:first-child { width: 125px; }
.chg .rows:first-child svg { margin-right: 0; }
.big { display: flex; flex-direction: column; align-items: center; padding-top: 3px; text-align: center; }
.big p { margin: 1px 0 0; }
.comm .big { padding-left: 2px; }
.small { justify-self: start; margin-top: 1px; }
.duo { display: flex; gap: 11px; }
.off { color: #b1b1b1; }
.fold { margin: 77px 0 0 136px; }
.caret { border: 3px solid transparent; border-top: 4px solid #666; border-bottom: 0; }
.abc { font: bold 7px "Open Sans", sans-serif; fill: #444; }
.jp { font: bold 15px "Noto Sans CJK JP", sans-serif; fill: #107c10; }
.lat { font: 20px "Open Sans", sans-serif; fill: #0078d7; }

.formula { height: 46px; flex: none; display: flex; padding: 10px 0 0 5px; }
.formula > div { height: 26px; background: #fdfdfd; border: 1px solid #c3c3c3; display: flex; align-items: center; }
.name { width: 102px; padding: 0 6px; justify-content: space-between; color: #444; font-size: 13px; letter-spacing: -.1px; }
.name .caret { border-width: 4px 4px 0; }
.dots { width: 2px; height: 10px; background: repeating-linear-gradient(#aaa 0 2px, transparent 2px 4px); margin: 8px 14px 0; }
.fx { width: 110px; padding: 0 12px; justify-content: space-between; }
.fx em { font: italic bold 16px/20px "Liberation Serif", serif; color: #666; letter-spacing: -1px; }
.fx small { font-size: 12px; }
.input { width: 703px; margin-left: 3px; justify-content: flex-end; padding-right: 4px; }

.book { flex: 1; display: flex; min-height: 0; }
.sheet { width: 937px; border-right: 1px solid #9b9b9b; border-bottom: 1px solid #9b9b9b; overflow: hidden; flex: none; }
.colheads { display: flex; height: 20px; border-bottom: 1px solid #9b9b9b; font: 13.500px/20px Lato, "Open Sans", sans-serif; letter-spacing: -.3px; color: #111; background: #e6e6e6; }
.colheads span { width: 20px; border-right: 1px solid #bbb; text-align: center; flex: none; display: flex; justify-content: center; }
.colheads .corner { width: 26px; padding: 4px 3px 3px 10px; }
.corner::after { content: ""; border-left: 12px solid transparent; border-bottom: 12px solid #b5b5b5; }
.colheads .wide { width: 63px; }
.cells { display: flex; background: #fff; }
.rowheads { width: 26px; border-right: 1px solid #9b9b9b; background: #e6e6e6; flex: none; font: 13.500px Lato, sans-serif; color: #111; letter-spacing: -.4px; height: 765px; overflow: hidden; }
.rowheads div { border-bottom: 1px solid #c0c0c0; display: flex; align-items: flex-end; justify-content: center; line-height: 17px; }
.gridline { stroke: #d4d4d4; shape-rendering: crispEdges; }
.celltext { font: 13.500px Lato, sans-serif; fill: #111; letter-spacing: -.3px; }
.note text { font: 40px Lato, sans-serif; fill: #111; stroke: none; letter-spacing: -1px; }
.xl .vscroll { margin: 2px 0 0 3px; }
.xl .vscroll .grip { height: 734px; }
.xl .vscroll .space { flex: 1; }

.sheetbar { height: 28px; flex: none; display: flex; }
.nav { width: 99px; border-top: 0; }
.sheettab { width: 66px; height: 25px; margin-top: -1px; background: #fff; border: 1px solid #9b9b9b; border-width: 0 1px; box-shadow: inset 0 -2px #217346; color: #217346; font-weight: 700; line-height: 25px; text-align: center; letter-spacing: -.3px; margin-left: 1px; }
.plus { margin: 5px 0 0 32px; }
.sheetbar .dots { margin: 9px 15px 0 360px; }
.hscroll { display: flex; height: 15px; width: 347px; margin-top: 7px; background: #dadada; }
.hscroll .gap { width: 22px; }
.hscroll .grip { width: 99px; }
.hscroll .space { flex: 1; }

.taskbar { height: 40px; background: #1b1b1b; display: flex; color: #fff; }
.search { width: 344px; background: #f2f2f2; border: 1px solid #c9c9c9; display: flex; padding-left: 11px; color: #222; font-size: 15px; line-height: 40px; letter-spacing: -.4px; margin-right: 3px; }
.search svg:first-child { margin: 11px 10px 0 0; }
.search span { width: 224px; }
.art { overflow: hidden; }
.app { width: 40px; height: 40px; display: flex; align-items: center; justify-content: center; margin-right: 9px; flex: none; }
.app:nth-child(3) { margin-right: 0; margin-left: 1px; }
.app.view { margin-right: 18px; }
.open { box-shadow: inset 0 -2px #76b9ed; }
.multi { background: linear-gradient(#4f7fa5, #4f7fa5) right bottom / 8px 2px no-repeat; box-shadow: none; position: relative; }
.multi::before { content: ""; position: absolute; left: 0; bottom: 0; width: 32px; height: 2px; background: #76b9ed; }
.cube { color: #e2e2e2; }
.cube.dark { color: #858585; }
.logo { font: bold 12px "Open Sans", sans-serif; fill: #fff; }
.tray { margin-left: auto; width: 357px; display: flex; font-size: 15px; line-height: 42px; }
.tray > svg:first-child { margin-top: 9px; }
.temp { margin-left: 9px; width: 37px; letter-spacing: -.6px; }
.sunny { width: 98px; letter-spacing: -.45px; }
.sys { margin-top: 12px; }
.clock { width: 72px; margin-left: 4px; text-align: center; font-size: 12px; line-height: 18px; padding-top: 2px; letter-spacing: -.5px; }
.notif { margin: 10px 0 0 15px; }
.badge { font: bold 12px "Open Sans", sans-serif; fill: #fff; }
.desk { width: 1px; background: #777; margin-left: 11px; }
```
FILE: sheet.js
```js
const NS = 'http://www.w3.org/2000/svg';
const rowEnds = [243,263,283,304,326,348,370,391,411,431,452,473,493,513,534,555,576,598,619,639,659,680,701,721,741,761,781,802,823,844,865,885,905,925,945,965,985];
const letters = 'ABCDEFGHIJKLMNOPQRSTUVWXYZ';
const names = [...letters.slice(4), ...[...letters.slice(0, 20)].map(c => 'A' + c)];
const cols = document.getElementById('cols');
for (const n of [...names, 'AU']) {
  const s = document.createElement('span');
  s.textContent = n;
  if (n === 'AU') s.className = 'wide';
  cols.append(s);
}
const lines = document.getElementById('lines');
function line(x1, y1, x2, y2) {
  const l = document.createElementNS(NS, 'line');
  l.setAttribute('class', 'gridline');
  l.setAttribute('x1', x1); l.setAttribute('y1', y1);
  l.setAttribute('x2', x2); l.setAttribute('y2', y2);
  lines.append(l);
}
for (let x = 1006; x <= 1826; x += 20) line(x + .5, 224, x + .5, 989);
line(1889.5, 224, 1889.5, 989);
const rows = document.getElementById('rows');
const cellText = document.getElementById('cellText');
let top0 = 223;
rowEnds.forEach((y, i) => {
  line(987, y + .5, 1898, y + .5);
  const d = document.createElement('div');
  d.textContent = i + 1;
  d.style.height = (y - top0) + 'px';
  rows.append(d);
  if (i >= 6 && i < 30) {
    const t = document.createElementNS(NS, 'text');
    t.textContent = i - 6;
    t.setAttribute('x', 1887);
    t.setAttribute('y', y - 4);
    t.setAttribute('text-anchor', 'end');
    cellText.append(t);
  }
  top0 = y;
});
```
